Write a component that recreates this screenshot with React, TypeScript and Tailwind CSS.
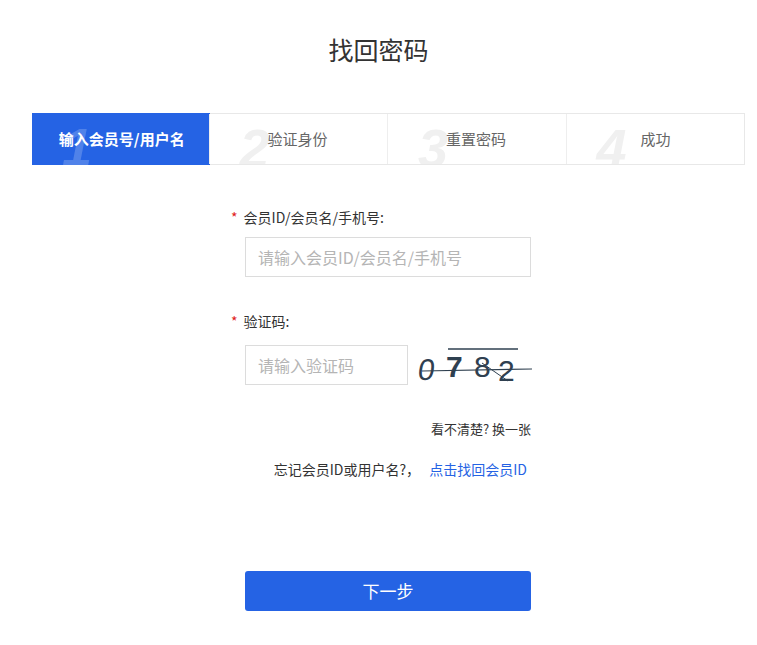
export default function App() {
  const steps = ["输入会员号/用户名", "验证身份", "重置密码", "成功"];
  return (
    <div className="w-[757px] h-[645px] bg-white text-[#333]" style={{ fontFamily: '"Microsoft YaHei","Noto Sans CJK SC",sans-serif' }}>
      <div className="pt-[32px] text-center text-[25px] leading-[34px] text-[#333]">找回密码</div>
      <div className="ml-[32px] mr-[12px] mt-[47px] flex h-[52px] border border-[#e8e8e8]">
        {steps.map((s, i) => (
          <div key={i} className={`relative flex-1 overflow-hidden ${i > 0 ? "border-l border-[#eeeeee]" : ""} ${i === 0 ? "bg-[#2563e4] -m-px h-[52px]" : ""}`}>
            <span className={`absolute left-[30px] top-[4px] text-[54px] leading-[60px] font-bold italic ${i === 0 ? "text-white/20" : "text-[#f0f0f0]"}`} style={{ fontFamily: '"Liberation Sans",Arial,sans-serif' }}>{i + 1}</span>
            <span className={`relative flex h-full items-center text-[15px] ${i === 0 ? "justify-center font-bold text-white pl-[2px]" : i === 3 ? "pl-[74px] text-[#666]" : "pl-[58px] text-[#666]"}`}>{s}</span>
          </div>
        ))}
      </div>
      <div className="ml-[231px] mt-[42px] text-[14px]">
        <div className="leading-[20px]"><span className="text-[#e02020] mr-[6px]">*</span>会员ID/会员名/手机号:</div>
        <input className="block ml-[14px] mt-[10px] w-[286px] h-[40px] border border-[#dcdcdc] px-[12px] text-[16px] outline-none placeholder:text-[#b5b5b5]" placeholder="请输入会员ID/会员名/手机号" />
        <div className="mt-[34px] leading-[20px]"><span className="text-[#e02020] mr-[6px]">*</span>验证码:</div>
        <div className="ml-[14px] mt-[12px] flex items-center">
          <input className="w-[163px] h-[40px] border border-[#dcdcdc] px-[12px] text-[16px] outline-none placeholder:text-[#b5b5b5]" placeholder="请输入验证码" />
          <svg width="116" height="44" viewBox="0 0 116 44" className="ml-[8px]">
            <line x1="32" y1="6" x2="102" y2="6" stroke="#2f4050" strokeWidth="1.5" />
            <g fill="#2f4050" fontFamily="Liberation Sans, sans-serif" fontSize="30">
              <text x="6" y="37" transform="skewX(-8)">0</text>
              <text x="30" y="34" fontWeight="bold">7</text>
              <text x="58" y="34">8</text>
              <text x="82" y="38">2</text>
            </g>
            <line x1="6" y1="28" x2="116" y2="26" stroke="#2f4050" strokeWidth="1.2" />
            <line x1="66" y1="20" x2="92" y2="38" stroke="#2f4050" strokeWidth="1" />
          </svg>
        </div>
        <div className="w-[300px] mt-[32px] text-right text-[13px] leading-[20px]">看不清楚? 换一张</div>
        <div className="w-[296px] mt-[20px] text-right text-[14px] leading-[20px]">忘记会员ID或用户名?， <span className="ml-[6px] text-[#2563e4]">点击找回会员ID</span></div>
        <button className="block ml-[14px] mt-[92px] w-[286px] h-[40px] rounded-[3px] bg-[#2563e4] text-white text-[17px]">下一步</button>
      </div>
    </div>
  );
}
